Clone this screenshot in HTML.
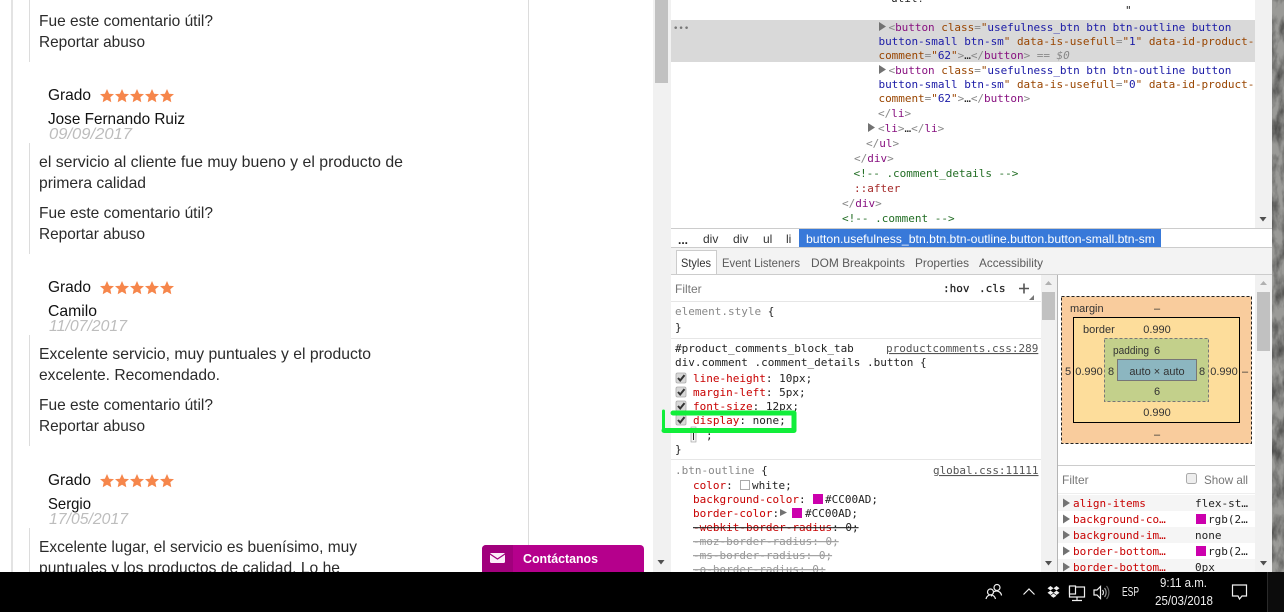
<!DOCTYPE html>
<html><head><meta charset="utf-8"><style>
html,body{margin:0;padding:0;width:1284px;height:612px;overflow:hidden;background:#fff}
svg{display:block}
.s{font-family:"Liberation Sans",sans-serif;font-size:16px;fill:#2b2b2b}
.k{font-family:"Liberation Sans",sans-serif;font-size:16px;fill:#111}
.d{font-family:"Liberation Sans",sans-serif;font-size:16px;font-style:italic;fill:#bdbdbd}
.m{font-family:"DejaVu Sans Mono",monospace;font-size:11px;fill:#222}
.q{letter-spacing:-.03px}
.u{font-family:"Liberation Sans",sans-serif;font-size:12px;fill:#333}
.b{font-family:"Liberation Sans",sans-serif;font-size:11px;fill:#333}
.w{font-family:"Liberation Sans",sans-serif;font-size:13px;fill:#eee}
.t{fill:#881280}.g{fill:#888}.n{fill:#994500}.v{fill:#1a1aa6}.c{fill:#236e25}.p{fill:#c80000}
</style></head><body>
<svg width="1284" height="612" viewBox="0 0 1284 612" xmlns="http://www.w3.org/2000/svg">
<defs>
<filter id="st" x="0" y="0" width="100%" height="100%"><feTurbulence type="fractalNoise" baseFrequency="0.12 0.05" numOctaves="4" seed="5"/><feColorMatrix values="0 0 0 0 0 0 0 0 0 0 0 0 0 0 0 2 0 0 0 -0.7"/></filter>
<polygon id="a" points="0,-7 2.100,-2.300 7,-1.900 3.300,1.300 4.300,6.200 0,3.700 -4.300,6.200 -3.300,1.300 -7,-1.900 -2.100,-2.300" fill="#f6864b"/>
<g id="five"><use href="#a" x="0"/><use href="#a" x="15"/><use href="#a" x="30"/><use href="#a" x="45"/><use href="#a" x="60"/></g>
<path id="tr" d="M0 0L7 4.500L0 9Z" fill="#727272"/>
<path id="ck" d="M2.500 5.500L4.700 8L9 2.600" stroke="#333" stroke-width="2" fill="none"/>
</defs>

<rect x="0" y="0" width="1284" height="612" fill="#fff"/>
<!-- stone -->
<rect x="1272" y="0" width="12" height="572" fill="#9a9a97"/>
<rect x="1272" y="0" width="12" height="572" filter="url(#st)" opacity=".5"/>

<!-- left page -->
<rect x="11" y="0" width="2" height="572" fill="#e3e3e3"/>
<rect x="29" y="0" width="1" height="62" fill="#dcdcdc"/>
<rect x="29" y="143" width="1" height="111" fill="#dcdcdc"/>
<rect x="29" y="335" width="1" height="111" fill="#dcdcdc"/>
<rect x="29" y="528" width="1" height="44" fill="#dcdcdc"/>
<rect x="528" y="0" width="1" height="572" fill="#dcdcdc"/>

<text class="s" x="39" y="26" textLength="174" lengthAdjust="spacingAndGlyphs">Fue este comentario útil?</text>
<text class="s" x="39" y="47" textLength="106" lengthAdjust="spacingAndGlyphs">Reportar abuso</text>

<text class="k" x="48" y="100" textLength="43" lengthAdjust="spacingAndGlyphs">Grado</text>
<use href="#five" x="107" y="96"/>
<text class="k" x="48" y="124" textLength="137" lengthAdjust="spacingAndGlyphs">Jose Fernando Ruiz</text>
<text class="d" x="49" y="139" textLength="83" lengthAdjust="spacingAndGlyphs">09/09/2017</text>
<text class="s" x="39" y="167" textLength="364" lengthAdjust="spacingAndGlyphs">el servicio al cliente fue muy bueno y el producto de</text>
<text class="s" x="39" y="188" textLength="107" lengthAdjust="spacingAndGlyphs">primera calidad</text>
<text class="s" x="39" y="218" textLength="174" lengthAdjust="spacingAndGlyphs">Fue este comentario útil?</text>
<text class="s" x="39" y="239" textLength="106" lengthAdjust="spacingAndGlyphs">Reportar abuso</text>

<text class="k" x="48" y="292" textLength="43" lengthAdjust="spacingAndGlyphs">Grado</text>
<use href="#five" x="107" y="288"/>
<text class="k" x="48" y="316" textLength="49" lengthAdjust="spacingAndGlyphs">Camilo</text>
<text class="d" x="49" y="331" textLength="78" lengthAdjust="spacingAndGlyphs">11/07/2017</text>
<text class="s" x="39" y="359" textLength="332" lengthAdjust="spacingAndGlyphs">Excelente servicio, muy puntuales y el producto</text>
<text class="s" x="39" y="380" textLength="181" lengthAdjust="spacingAndGlyphs">excelente. Recomendado.</text>
<text class="s" x="39" y="410" textLength="174" lengthAdjust="spacingAndGlyphs">Fue este comentario útil?</text>
<text class="s" x="39" y="431" textLength="106" lengthAdjust="spacingAndGlyphs">Reportar abuso</text>

<text class="k" x="48" y="485" textLength="43" lengthAdjust="spacingAndGlyphs">Grado</text>
<use href="#five" x="107" y="481"/>
<text class="k" x="48" y="509" textLength="43" lengthAdjust="spacingAndGlyphs">Sergio</text>
<text class="d" x="49" y="524" textLength="79" lengthAdjust="spacingAndGlyphs">17/05/2017</text>
<text class="s" x="39" y="552" textLength="318" lengthAdjust="spacingAndGlyphs">Excelente lugar, el servicio es buenísimo, muy</text>
<text class="s" x="39" y="573" textLength="301" lengthAdjust="spacingAndGlyphs">puntuales y los productos de calidad. Lo he</text>

<!-- contact button -->
<path d="M482 572V549a4 4 0 0 1 4-4H640a4 4 0 0 1 4 4V572Z" fill="#b5008c"/>
<path d="M482 572V549a4 4 0 0 1 4-4H513V572Z" fill="#a1007c"/>
<rect x="490" y="553" width="15" height="10" rx="1.200" fill="#fbeef8"/>
<path d="M490 554L497.500 559L505 554" stroke="#a1007c" stroke-width="1.200" fill="none"/>
<text x="523" y="563" textLength="75" lengthAdjust="spacingAndGlyphs" style="font-family:'Liberation Sans',sans-serif;font-size:12.500px;font-weight:bold;fill:#fff">Contáctanos</text>

<!-- main scrollbar -->
<rect x="653" y="0" width="18" height="572" fill="#f1f1f1"/>
<rect x="655" y="0" width="13" height="83" fill="#c1c1c1"/>
<path d="M657.500 560H664.500L661 564.500Z" fill="#505050"/>

<!-- DOM panel -->
<rect x="671" y="0" width="584" height="228" fill="#fff"/>
<rect x="671" y="20" width="584" height="42" fill="#d9d9d9"/>
<text class="m" x="673" y="31" style="fill:#777;font-size:9px">•••</text>
<text class="m" x="891" y="2">útil?</text>
<text class="m" x="1125" y="14">"</text>
<use href="#tr" x="879" y="22"/>
<text class="m q" y="31" x="888.500"><tspan class="g">&lt;</tspan><tspan class="t">button</tspan> <tspan class="n">class</tspan><tspan class="g">=</tspan><tspan class="n">"</tspan><tspan class="v">usefulness_btn btn btn-outline button</tspan></text>
<text class="m q" y="45" x="878.500"><tspan class="v">button-small btn-sm</tspan><tspan class="n">"</tspan> <tspan class="n">data-is-usefull</tspan><tspan class="g">=</tspan><tspan class="n">"</tspan><tspan class="v">1</tspan><tspan class="n">"</tspan> <tspan class="n">data-id-product-</tspan></text>
<text class="m q" y="59" x="878.500"><tspan class="n">comment</tspan><tspan class="g">=</tspan><tspan class="n">"</tspan><tspan class="v">62</tspan><tspan class="n">"</tspan><tspan class="g">&gt;</tspan>…<tspan class="g">&lt;/</tspan><tspan class="t">button</tspan><tspan class="g">&gt; == </tspan><tspan class="g" font-style="italic">$0</tspan></text>
<use href="#tr" x="879" y="65"/>
<text class="m q" y="74" x="888.500"><tspan class="g">&lt;</tspan><tspan class="t">button</tspan> <tspan class="n">class</tspan><tspan class="g">=</tspan><tspan class="n">"</tspan><tspan class="v">usefulness_btn btn btn-outline button</tspan></text>
<text class="m q" y="88" x="878.500"><tspan class="v">button-small btn-sm</tspan><tspan class="n">"</tspan> <tspan class="n">data-is-usefull</tspan><tspan class="g">=</tspan><tspan class="n">"</tspan><tspan class="v">0</tspan><tspan class="n">"</tspan> <tspan class="n">data-id-product-</tspan></text>
<text class="m q" y="102" x="878.500"><tspan class="n">comment</tspan><tspan class="g">=</tspan><tspan class="n">"</tspan><tspan class="v">62</tspan><tspan class="n">"</tspan><tspan class="g">&gt;</tspan>…<tspan class="g">&lt;/</tspan><tspan class="t">button</tspan><tspan class="g">&gt;</tspan></text>
<text class="m" y="117" x="878"><tspan class="g">&lt;/</tspan><tspan class="t">li</tspan><tspan class="g">&gt;</tspan></text>
<use href="#tr" x="868" y="123"/>
<text class="m" y="132" x="878"><tspan class="g">&lt;</tspan><tspan class="t">li</tspan><tspan class="g">&gt;</tspan>…<tspan class="g">&lt;/</tspan><tspan class="t">li</tspan><tspan class="g">&gt;</tspan></text>
<text class="m" y="147" x="866"><tspan class="g">&lt;/</tspan><tspan class="t">ul</tspan><tspan class="g">&gt;</tspan></text>
<text class="m" y="162" x="854"><tspan class="g">&lt;/</tspan><tspan class="t">div</tspan><tspan class="g">&gt;</tspan></text>
<text class="m c q" y="177" x="853.500">&lt;!-- .comment_details --&gt;</text>
<text class="m" y="192" x="854" style="fill:#a52a2a">::after</text>
<text class="m" y="207" x="842"><tspan class="g">&lt;/</tspan><tspan class="t">div</tspan><tspan class="g">&gt;</tspan></text>
<text class="m c" y="222" x="842">&lt;!-- .comment --&gt;</text>
<rect x="1255" y="0" width="17" height="228" fill="#f1f1f1"/>
<path d="M1259.500 217H1266.500L1263 221.500Z" fill="#505050"/>

<!-- breadcrumb -->
<rect x="671" y="228" width="601" height="1" fill="#ccc"/>
<rect x="671" y="229" width="601" height="18" fill="#fff"/>
<rect x="799" y="229" width="362" height="18" fill="#3879d9"/>
<rect x="671" y="247" width="601" height="1" fill="#ccc"/>
<text class="u" x="678" y="244" style="font-weight:bold;fill:#222">...</text>
<text class="u" x="703" y="243">div</text>
<text class="u" x="733" y="243">div</text>
<text class="u" x="763" y="243">ul</text>
<text class="u" x="786" y="243">li</text>
<text class="u" x="806" y="243" textLength="349" lengthAdjust="spacingAndGlyphs" style="fill:#fff">button.usefulness_btn.btn.btn-outline.button.button-small.btn-sm</text>

<!-- tabs -->
<rect x="671" y="248" width="601" height="27" fill="#f3f3f3"/>
<rect x="671" y="274" width="601" height="1" fill="#ccc"/>
<rect x="676.500" y="250.500" width="40" height="24" fill="#fff" stroke="#ccc"/>
<text class="u" x="681" y="267" textLength="30" lengthAdjust="spacingAndGlyphs">Styles</text>
<text class="u" x="722" y="267" textLength="78" lengthAdjust="spacingAndGlyphs" style="fill:#5a5a5a">Event Listeners</text>
<text class="u" x="811" y="267" textLength="94" lengthAdjust="spacingAndGlyphs" style="fill:#5a5a5a">DOM Breakpoints</text>
<text class="u" x="915" y="267" textLength="54" lengthAdjust="spacingAndGlyphs" style="fill:#5a5a5a">Properties</text>
<text class="u" x="979" y="267" textLength="64" lengthAdjust="spacingAndGlyphs" style="fill:#5a5a5a">Accessibility</text>

<!-- styles panel -->
<rect x="671" y="275" width="370" height="297" fill="#fff"/>
<rect x="671" y="301" width="370" height="1" fill="#e6e6e6"/>
<rect x="671" y="338" width="370" height="1" fill="#e6e6e6"/>
<rect x="671" y="459" width="370" height="1" fill="#e6e6e6"/>
<text class="u" x="675" y="293" style="fill:#777">Filter</text>
<text class="m" x="943" y="292" style="fill:#222;stroke:#222;stroke-width:.25">:hov</text>
<text class="m" x="979" y="292" style="fill:#222;stroke:#222;stroke-width:.25">.cls</text>
<path d="M1019 288.500H1029M1024 283.500V293.500" stroke="#555" stroke-width="1.600"/>
<path d="M1034 295V300H1029Z" fill="#777"/>

<text class="m" x="675" y="315" style="fill:#888">element.style <tspan style="fill:#222">{</tspan></text>
<text class="m" x="675" y="331">}</text>
<text class="m" x="675" y="352">#product_comments_block_tab</text>
<text class="m" x="886" y="352" style="fill:#555;text-decoration:underline">productcomments.css:289</text>
<text class="m" x="675" y="366">div.comment .comment_details .button {</text>

<rect x="676" y="373" width="10" height="10" rx="1.500" fill="#d8d8d8" stroke="#aaa" stroke-width=".8"/><use href="#ck" x="675.500" y="372.500"/>
<rect x="676" y="387" width="10" height="10" rx="1.500" fill="#d8d8d8" stroke="#aaa" stroke-width=".8"/><use href="#ck" x="675.500" y="386.500"/>
<rect x="676" y="401" width="10" height="10" rx="1.500" fill="#d8d8d8" stroke="#aaa" stroke-width=".8"/><use href="#ck" x="675.500" y="400.500"/>
<rect x="676" y="415" width="10" height="10" rx="1.500" fill="#d8d8d8" stroke="#aaa" stroke-width=".8"/><use href="#ck" x="675.500" y="414.500"/>
<text class="m" x="693" y="382"><tspan class="p">line-height</tspan>: 10px;</text>
<text class="m" x="693" y="396"><tspan class="p">margin-left</tspan>: 5px;</text>
<text class="m" x="693" y="410"><tspan class="p">font-size</tspan>: 12px;</text>
<text class="m" x="693" y="424"><tspan class="p">display</tspan>: none;</text>
<rect x="691" y="427" width="5" height="15" fill="#f4f4f4" stroke="#999" stroke-width=".6"/>
<rect x="693" y="429" width="1" height="11" fill="#222"/>
<text class="m" x="706" y="439">;</text>
<text class="m" x="675" y="453">}</text>

<text class="m" x="675" y="474" style="fill:#888">.btn-outline <tspan style="fill:#222">{</tspan></text>
<text class="m" x="933" y="474" style="fill:#555;text-decoration:underline;letter-spacing:-.03px">global.css:11111</text>
<text class="m" x="693" y="489"><tspan class="p">color</tspan>:</text>
<rect x="740.500" y="480.500" width="9" height="9" fill="#fff" stroke="#aaa"/>
<text class="m" x="752" y="489">white;</text>
<text class="m" x="693" y="503"><tspan class="p">background-color</tspan>:</text>
<rect x="813" y="494" width="10" height="10" fill="#cc00ad"/>
<text class="m" x="825" y="503">#CC00AD;</text>
<text class="m" x="693" y="517"><tspan class="p">border-color</tspan>:</text>
<path d="M780 509V516L787 512.500Z" fill="#727272"/>
<rect x="792" y="508" width="10" height="10" fill="#cc00ad"/>
<text class="m" x="805" y="517">#CC00AD;</text>
<text class="m" x="693" y="531" style="text-decoration:line-through"><tspan style="fill:#c80000"> -webkit-border-radius</tspan>: 0;</text>
<text class="m" x="693" y="545" style="text-decoration:line-through;fill:#999"> -moz-border-radius: 0;</text>
<text class="m" x="693" y="559" style="text-decoration:line-through;fill:#999"> -ms-border-radius: 0;</text>
<text class="m" x="693" y="573" style="text-decoration:line-through;fill:#999"> -o-border-radius: 0;</text>

<rect x="1041" y="275" width="16" height="297" fill="#f1f1f1"/>
<rect x="1042" y="292" width="13" height="28" fill="#c1c1c1"/>
<path d="M1045 285H1052L1048.500 281Z" fill="#b0b0b0"/>
<path d="M1045 561H1052L1048.500 565.500Z" fill="#505050"/>
<rect x="1057" y="275" width="1" height="297" fill="#b5b5b5"/>

<!-- sidebar -->
<rect x="1058" y="275" width="197" height="297" fill="#fff"/>
<rect x="1061.500" y="296.500" width="190" height="147" fill="#f9cc9d" stroke="#222" stroke-dasharray="3 2"/>
<rect x="1073.500" y="317.500" width="166" height="105" fill="#fddd9b" stroke="#000"/>
<rect x="1104.500" y="338.500" width="104" height="63" fill="#c3d08b" stroke="#777" stroke-dasharray="3 2"/>
<rect x="1117.500" y="359.500" width="79" height="21" fill="#8cb6c0" stroke="#777"/>
<text class="b" x="1070" y="312">margin</text>
<text class="b" x="1157" y="312" text-anchor="middle">–</text>
<text class="b" x="1083" y="333">border</text>
<text class="b" x="1157" y="333" text-anchor="middle">0.990</text>
<text class="b" x="1113" y="354" textLength="36" lengthAdjust="spacingAndGlyphs">padding</text>
<text class="b" x="1157" y="354" text-anchor="middle">6</text>
<text class="b" x="1068" y="375" text-anchor="middle">5</text>
<text class="b" x="1089" y="375" text-anchor="middle">0.990</text>
<text class="b" x="1111" y="375" text-anchor="middle">8</text>
<text class="b" x="1157" y="375" text-anchor="middle">auto × auto</text>
<text class="b" x="1202" y="375" text-anchor="middle">8</text>
<text class="b" x="1224" y="375" text-anchor="middle">0.990</text>
<text class="b" x="1245" y="375" text-anchor="middle">–</text>
<text class="b" x="1157" y="395" text-anchor="middle">6</text>
<text class="b" x="1157" y="416" text-anchor="middle">0.990</text>
<text class="b" x="1157" y="438" text-anchor="middle">–</text>
<rect x="1058" y="465" width="197" height="1" fill="#ccc"/>
<text class="u" x="1062" y="484" style="fill:#777">Filter</text>
<rect x="1186.500" y="473.500" width="10" height="10" rx="2" fill="#eee" stroke="#aaa"/>
<text class="u" x="1204" y="484" textLength="44" lengthAdjust="spacingAndGlyphs" style="fill:#777">Show all</text>
<rect x="1058" y="493" width="197" height="1" fill="#eee"/>
<rect x="1058" y="495" width="197" height="16" fill="#f5f5f5"/>
<rect x="1058" y="527" width="197" height="16" fill="#f5f5f5"/>
<rect x="1058" y="559" width="197" height="13" fill="#f5f5f5"/>
<use href="#tr" x="1063" y="498.500"/>
<use href="#tr" x="1063" y="514.500"/>
<use href="#tr" x="1063" y="530.500"/>
<use href="#tr" x="1063" y="546.500"/>
<use href="#tr" x="1063" y="562.500"/>
<text class="m p" x="1073" y="507">align-items</text>
<text class="m p" x="1073" y="523">background-co…</text>
<text class="m p" x="1073" y="539">background-im…</text>
<text class="m p" x="1073" y="555">border-bottom…</text>
<text class="m p" x="1073" y="571">border-bottom…</text>
<text class="m" x="1195" y="507">flex-st…</text>
<rect x="1196" y="514" width="10" height="10" fill="#cc00ad"/>
<text class="m" x="1208" y="523">rgb(2…</text>
<text class="m" x="1195" y="539">none</text>
<rect x="1196" y="546" width="10" height="10" fill="#cc00ad"/>
<text class="m" x="1208" y="555">rgb(2…</text>
<text class="m" x="1195" y="571">0px</text>

<rect x="1255" y="275" width="17" height="297" fill="#f1f1f1"/>
<rect x="1257" y="292" width="13" height="59" fill="#c1c1c1"/>
<path d="M1260 285H1267L1263.500 281Z" fill="#b0b0b0"/>
<path d="M1260 561H1267L1263.500 565.500Z" fill="#505050"/>

<!-- green highlight -->
<path d="M673 413H794V430.500H664" fill="none" stroke="#11ee3a" stroke-width="5" stroke-linejoin="round" stroke-linecap="round"/>
<path d="M663.500 411V431" fill="none" stroke="#11ee3a" stroke-width="3" stroke-linecap="round"/>

<!-- taskbar -->
<rect x="0" y="572" width="1284" height="40" fill="#000"/>
<rect x="1267" y="572" width="1" height="40" fill="#2a2a2a"/>
<rect x="1268" y="572" width="16" height="40" fill="#0c0c0c"/>
<g fill="none" stroke="#f0f0f0" stroke-width="1.200">
<circle cx="997" cy="587.500" r="3"/>
<path d="M991.500 596.500a5 5 0 0 1 10-1"/>
<circle cx="990.500" cy="592" r="3" fill="#000"/>
<path d="M986 599a4.800 4.800 0 0 1 9.500 0"/>
<path d="M1023.500 594.500L1029 589L1034.500 594.500"/>
<rect x="1069.500" y="587" width="15" height="10"/>
<rect x="1069.500" y="586" width="6" height="8" fill="#000"/>
<path d="M1077 597V600M1072 600.500H1082"/>
<path d="M1094 590H1097L1100.500 586.500V598.500L1097 595H1094Z"/>
<path d="M1102.500 590a4 4 0 0 1 0 5"/>
<path d="M1104.500 588a7 7 0 0 1 0 9" stroke="#9a9a9a"/>
<path d="M1106.500 586a10 10 0 0 1 0 13" stroke="#666"/>
<path d="M1232.500 585H1246.500V596H1242L1239.500 599L1238 596H1232.500Z"/>
</g>
<g fill="#f0f0f0">
<path d="M1050.500 586L1053.500 588.200L1050.500 590.400L1047.500 588.200Z"/>
<path d="M1056.500 586L1059.500 588.200L1056.500 590.400L1053.500 588.200Z"/>
<path d="M1050.500 590.600L1053.500 592.800L1050.500 595L1047.500 592.800Z"/>
<path d="M1056.500 590.600L1059.500 592.800L1056.500 595L1053.500 592.800Z"/>
<path d="M1053.500 593.500L1056.500 595.700L1053.500 597.800L1050.500 595.700Z"/>
</g>
<text class="w" x="1122" y="596" textLength="17" lengthAdjust="spacingAndGlyphs">ESP</text>
<text class="w" x="1160" y="587" textLength="47" lengthAdjust="spacingAndGlyphs">9:11 a.m.</text>
<text class="w" x="1155" y="605" textLength="58" lengthAdjust="spacingAndGlyphs">25/03/2018</text>
</svg>
</body></html>
